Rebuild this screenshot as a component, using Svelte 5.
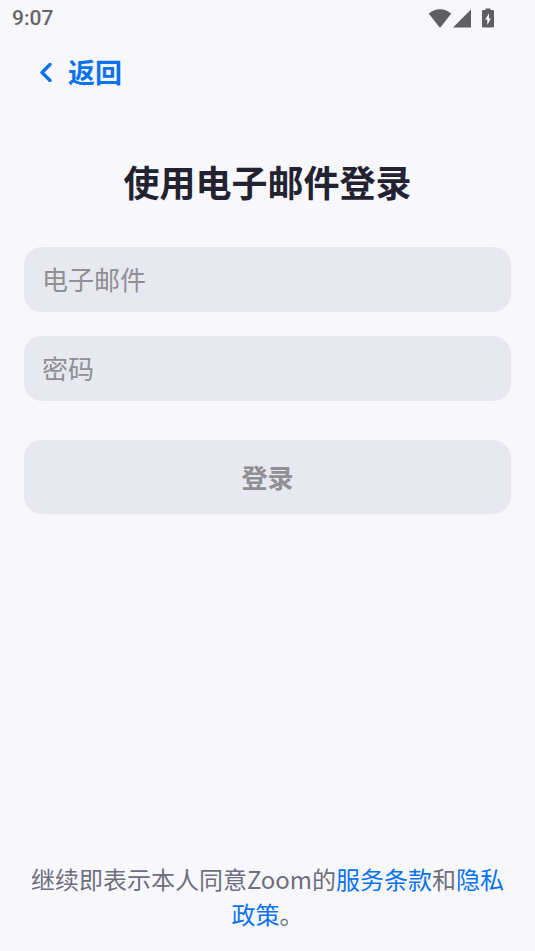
<script>
	let email = $state("");
	let password = $state("");
	let ready = $derived(email !== "" && password !== "");
</script>

<div class="screen">
	<div class="status">
		<span>9:07</span>
		<div class="status-icons">
			<svg class="wifi" viewBox="0 0 22 19">
				<path d="M.3 4.300C3.300 1.700 7 .3 11 .3s7.700 1.400 10.700 4q.5.500.1 1L11.500 18.300q-.5.500-1 0L.2 5.300q-.4-.5.1-1z" />
			</svg>
			<svg class="signal" viewBox="0 0 18 19">
				<path d="M18 .5v18H0z" />
			</svg>
			<svg class="battery" viewBox="0 0 12 20">
				<path
					fill-rule="evenodd"
					d="M3.500.5h5V2H11q1 0 1 1v15.500q0 1-1 1H1q-1 0-1-1V3q0-1 1-1h2.500zM7 5.500L3 11.500h2.300V17L9 10.500H7z"
				/>
			</svg>
		</div>
	</div>

	<header>
		<button class="back" type="button">
			<svg viewBox="0 0 12 20">
				<path d="M10 2.500L2 10.500l8 8" />
			</svg>
			返回
		</button>
	</header>

	<main>
		<h1>使用电子邮件登录</h1>
		<form onsubmit={(e) => e.preventDefault()}>
			<input
				type="email"
				aria-label="电子邮件"
				placeholder="电子邮件"
				bind:value={email}
			/>
			<input
				type="password"
				aria-label="密码"
				placeholder="密码"
				bind:value={password}
			/>
			<button class="login" class:ready type="submit" disabled={!ready}>
				登录
			</button>
		</form>
	</main>

	<footer>
		继续即表示本人同意Zoom的<a href="#terms">服务条款</a>和<a href="#privacy"
			>隐私政策</a
		>。
	</footer>
</div>

<style>
	:global(body) {
		background: #f8f8fc;
	}

	.screen {
		min-height: 100vh;
		box-sizing: border-box;
		display: flex;
		flex-direction: column;
		padding-bottom: 20px;
		font-family: "Noto Sans CJK SC", sans-serif;
		color: #222230;
	}

	.status {
		display: flex;
		align-items: center;
		justify-content: space-between;
		height: 36px;
		padding: 0 41px 0 12px;
		font: 500 21px/36px Roboto, sans-serif;
		color: #666668;
	}

	.status-icons {
		display: flex;
		align-items: center;
		gap: 2px;
	}

	.status-icons svg {
		height: 19px;
		fill: #5f5f61;
	}

	.wifi {
		width: 22px;
	}

	.signal {
		width: 18px;
	}

	.status-icons .battery {
		width: 12px;
		height: 20px;
		margin-left: 9px;
	}

	header {
		padding: 16px 40px 0;
	}

	button,
	input {
		font-family: inherit;
		border: 0;
	}

	.back {
		display: flex;
		align-items: center;
		gap: 16px;
		padding: 0;
		background: none;
		color: #0b72ed;
		font-size: 27px;
		font-weight: 700;
		line-height: 40px;
		cursor: pointer;
	}

	.back svg {
		width: 12px;
		height: 20px;
		fill: none;
		stroke: currentColor;
		stroke-width: 3.4;
		stroke-linecap: round;
		stroke-linejoin: round;
	}

	main {
		flex: 1;
		padding: 62px 24px 0;
	}

	h1 {
		margin: 0 0 39px;
		font-size: 36px;
		font-weight: 700;
		line-height: 54px;
		text-align: center;
	}

	form {
		display: flex;
		flex-direction: column;
		gap: 24px;
	}

	input {
		box-sizing: border-box;
		width: 100%;
		height: 65px;
		padding: 0 18px 2px;
		border-radius: 18px;
		background: #e8e8f0;
		color: #222230;
		font-size: 26px;
	}

	input::placeholder {
		color: #8f8f94;
		opacity: 1;
	}

	.login {
		height: 74px;
		margin-top: 15px;
		padding: 0 0 2px;
		border-radius: 18px;
		background: #e8e8f0;
		color: #8f8f94;
		font-size: 26px;
		font-weight: 700;
	}

	.login.ready {
		background: #0b72ed;
		color: #fff;
	}

	footer {
		padding: 0 24px;
		font-size: 24px;
		line-height: 35px;
		text-align: center;
		color: #6e6e7c;
	}

	footer a {
		color: #0b72ed;
		text-decoration: none;
	}
</style>
